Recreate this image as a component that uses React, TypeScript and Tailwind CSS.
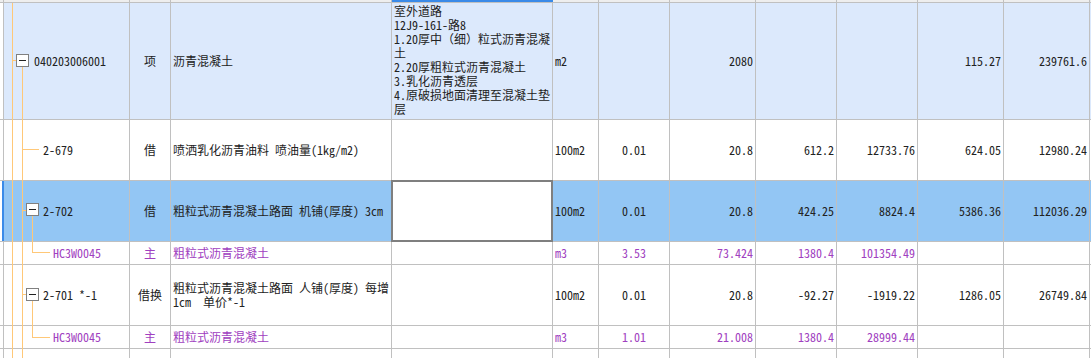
import clsx from "clsx";
import type { ReactNode } from "react";

// column widths, each one includes its 1px right border
const COLS = [
  "w-[4px]",
  "w-[126px]",
  "w-[41px]",
  "w-[221px]",
  "w-[161px]",
  "w-[46px]",
  "w-[71px]",
  "w-[86px]",
  "w-[81px]",
  "w-[81px]",
  "w-[86px]",
  "w-[86px]",
];

type Align = "l" | "c" | "r" | "none";

function Cell({
  col,
  align = "l",
  className,
  children,
}: {
  col: number;
  align?: Align;
  className?: string;
  children?: ReactNode;
}) {
  return (
    <div
      className={clsx(
        "relative shrink-0 border-r border-[#c0c0c0] flex items-center whitespace-nowrap",
        COLS[col],
        align === "l" && "pl-[2px]",
        align === "c" && "justify-center",
        align === "r" && "justify-end pr-[2px]",
        className
      )}
    >
      {children}
    </div>
  );
}

function Row({ className, children }: { className?: string; children: ReactNode }) {
  return <div className={clsx("flex border-b border-[#c0c0c0]", className)}>{children}</div>;
}

function Box({ className }: { className: string }) {
  return (
    <span
      className={clsx(
        "absolute w-[13px] h-[13px] border border-[#808080] bg-white flex items-center justify-center",
        className
      )}
    >
      <span className="w-[7px] h-px bg-[#222]" />
    </span>
  );
}

const V1 = () => <span className="absolute left-[8px] top-0 -bottom-px w-px bg-[#ffc878]" />;
const V2 = () => <span className="absolute left-[18px] top-0 -bottom-px w-px bg-[#ffc878]" />;

function Lead({ selected }: { selected?: boolean }) {
  return (
    <div
      className={clsx(
        "shrink-0 w-[4px] bg-white",
        selected ? "border-r-2 border-[#3a8ae8]" : "border-r border-[#c0c0c0]"
      )}
    />
  );
}

function Filler() {
  return <div className="flex-1" />;
}

type Nums = [string, string, string, string, string, string, string, string];

function NumCells({ v }: { v: Nums }) {
  return (
    <>
      <Cell col={5}>{v[0]}</Cell>
      <Cell col={6} align="c">
        {v[1]}
      </Cell>
      <Cell col={7} align="r">
        {v[2]}
      </Cell>
      <Cell col={8} align="r">
        {v[3]}
      </Cell>
      <Cell col={9} align="r">
        {v[4]}
      </Cell>
      <Cell col={10} align="r">
        {v[5]}
      </Cell>
      <Cell col={11} align="r">
        {v[6]}
      </Cell>
    </>
  );
}

export default function App() {
  const purple = "text-[#a040c0]";
  return (
    <div
      className="w-[1091px] h-[358px] overflow-hidden bg-white text-[12px] leading-[14px] text-[#222]"
      style={{ fontFamily: '"Noto Sans Mono CJK SC", "Noto Sans CJK SC", monospace' }}
    >
      {/* header remnant */}
      <Row className="h-[3px] bg-[#eeeeee]">
        {COLS.map((c, i) => (
          <div key={i} className={clsx("shrink-0 border-r border-[#c0c0c0] relative", c)}>
            {i === 4 && <span className="absolute left-0 -right-px top-0 h-[2px] bg-[#3a8ae8]" />}
          </div>
        ))}
        <Filler />
      </Row>

      {/* 040203006001 */}
      <Row className="h-[117px] bg-[#dce9fc]">
        <Lead />
        <Cell col={1} align="none" className="pl-[30px]">
          <V1 />
          <span className="absolute left-[8px] top-[57px] w-[4px] h-px bg-[#ffc878]" />
          <Box className="left-[12px] top-[51px]" />
          <span className="absolute left-[18px] top-[64px] -bottom-px w-px bg-[#ffc878]" />
          040203006001
        </Cell>
        <Cell col={2} align="c">项</Cell>
        <Cell col={3}>沥青混凝土</Cell>
        <Cell col={4} className="items-start pt-px leading-[14px]">
          <div>
            室外道路
            <br />
            12J9-161-路8
            <br />
            1.20厚中（细）粒式沥青混凝
            <br />
            土
            <br />
            2.20厚粗粒式沥青混凝土
            <br />
            3.乳化沥青透层
            <br />
            4.原破损地面清理至混凝土垫
            <br />
            层
          </div>
        </Cell>
        <NumCells v={["m2", "", "2080", "", "", "115.27", "239761.6", ""]} />
        <Filler />
      </Row>

      {/* 2-679 */}
      <Row className="h-[61px]">
        <Lead />
        <Cell col={1} align="none" className="pl-[39px]">
          <V1 />
          <V2 />
          <span className="absolute left-[18px] top-[29px] w-[17px] h-px bg-[#ffc878]" />
          2-679
        </Cell>
        <Cell col={2} align="c">借</Cell>
        <Cell col={3}>喷洒乳化沥青油料 喷油量(1kg/m2)</Cell>
        <Cell col={4} />
        <NumCells v={["100m2", "0.01", "20.8", "612.2", "12733.76", "624.05", "12980.24", ""]} />
        <Filler />
      </Row>

      {/* 2-702 (selected) */}
      <Row className="h-[61px] bg-[#93c6f4]">
        <Lead selected />
        <Cell col={1} align="none" className="pl-[39px]">
          <V1 />
          <V2 />
          <span className="absolute left-[18px] top-[29px] w-[4px] h-px bg-[#ffc878]" />
          <Box className="left-[22px] top-[22px]" />
          <span className="absolute left-[28px] top-[35px] -bottom-px w-px bg-[#ffc878]" />
          2-702
        </Cell>
        <Cell col={2} align="c">借</Cell>
        <Cell col={3}>粗粒式沥青混凝土路面 机铺(厚度) 3cm</Cell>
        <Cell col={4}>
          <div className="absolute -left-px -top-px w-[162px] h-[62px] border-2 border-[#7f7f7f] bg-white" />
        </Cell>
        <NumCells v={["100m2", "0.01", "20.8", "424.25", "8824.4", "5386.36", "112036.29", ""]} />
        <Filler />
      </Row>

      {/* HC3W0045 */}
      <Row className={clsx("h-[23px]", purple)}>
        <Lead />
        <Cell col={1} align="none" className="pl-[49px]">
          <V1 />
          <V2 />
          <span className="absolute left-[28px] -top-px h-[11px] w-px bg-[#ffc878]" />
          <span className="absolute left-[28px] top-[10px] w-[18px] h-px bg-[#ffc878]" />
          HC3W0045
        </Cell>
        <Cell col={2} align="c">主</Cell>
        <Cell col={3}>粗粒式沥青混凝土</Cell>
        <Cell col={4} />
        <NumCells v={["m3", "3.53", "73.424", "1380.4", "101354.49", "", "", ""]} />
        <Filler />
      </Row>

      {/* 2-701 *-1 */}
      <Row className="h-[61px]">
        <Lead />
        <Cell col={1} align="none" className="pl-[39px]">
          <V1 />
          <V2 />
          <span className="absolute left-[18px] top-[29px] w-[4px] h-px bg-[#ffc878]" />
          <Box className="left-[22px] top-[23px]" />
          <span className="absolute left-[28px] top-[36px] -bottom-px w-px bg-[#ffc878]" />
          2-701 *-1
        </Cell>
        <Cell col={2} align="c">借换</Cell>
        <Cell col={3}>
          <div>
            粗粒式沥青混凝土路面 人铺(厚度) 每增
            <br />
            1cm&nbsp;&nbsp;单价*-1
          </div>
        </Cell>
        <Cell col={4} />
        <NumCells v={["100m2", "0.01", "20.8", "-92.27", "-1919.22", "1286.05", "26749.84", ""]} />
        <Filler />
      </Row>

      {/* HC3W0045 */}
      <Row className={clsx("h-[23px]", purple)}>
        <Lead />
        <Cell col={1} align="none" className="pl-[49px]">
          <V1 />
          <V2 />
          <span className="absolute left-[28px] -top-px h-[12px] w-px bg-[#ffc878]" />
          <span className="absolute left-[28px] top-[11px] w-[18px] h-px bg-[#ffc878]" />
          HC3W0045
        </Cell>
        <Cell col={2} align="c">主</Cell>
        <Cell col={3}>粗粒式沥青混凝土</Cell>
        <Cell col={4} />
        <NumCells v={["m3", "1.01", "21.008", "1380.4", "28999.44", "", "", ""]} />
        <Filler />
      </Row>

      {/* partially visible next row */}
      <Row className="h-[20px]">
        <Lead />
        <Cell col={1} align="none">
          <V1 />
          <V2 />
        </Cell>
        {COLS.slice(2).map((c, i) => (
          <div key={i} className={clsx("shrink-0 border-r border-[#c0c0c0]", c)} />
        ))}
        <Filler />
      </Row>
    </div>
  );
}
